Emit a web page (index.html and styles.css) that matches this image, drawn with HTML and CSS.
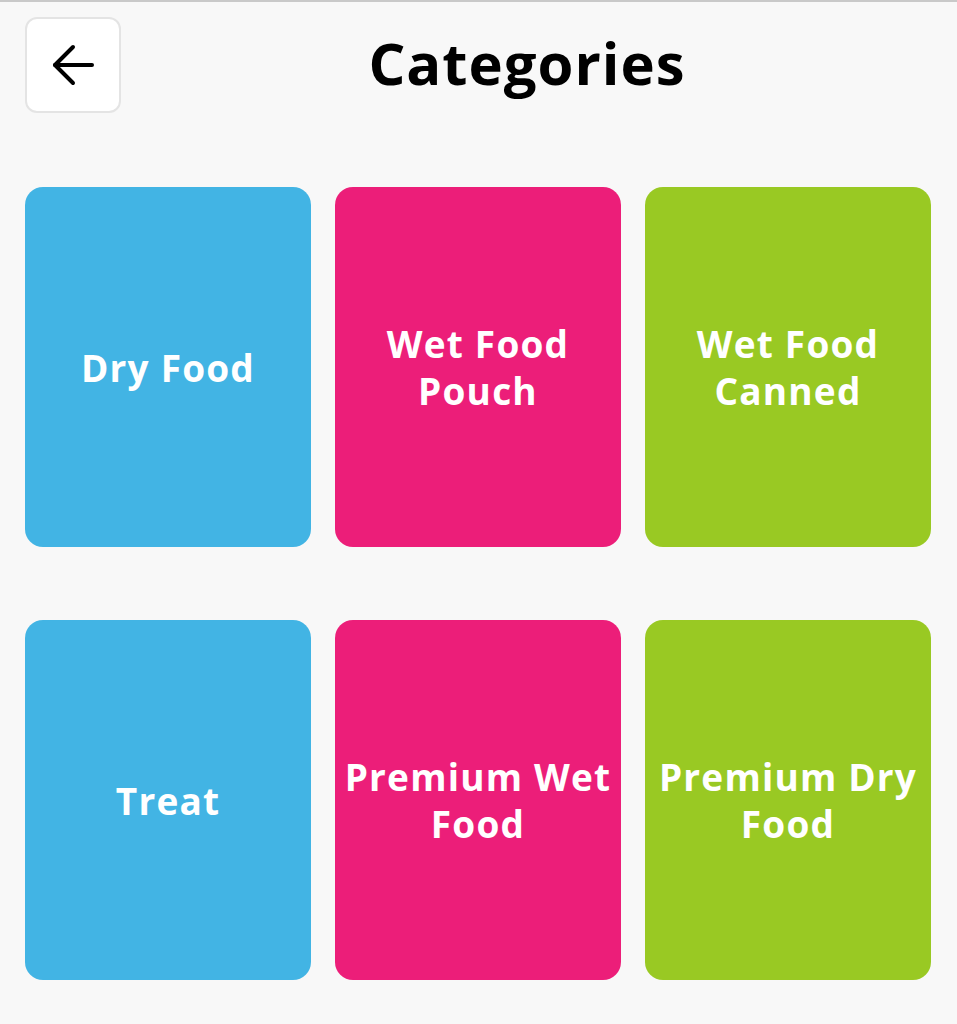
FILE: index.html
```html
<!DOCTYPE html>
<html lang="en">
<head>
    <meta charset="UTF-8">
    <meta name="viewport" content="width=device-width, initial-scale=1.0">
    <title>Categories</title>
    <link rel="stylesheet" href="styles.css">
</head>
<body>

<div class="top-line"></div>

<header class="header">
    <button class="back-btn" type="button" aria-label="Back">
        <svg width="42" height="42" viewBox="0 0 42 42" fill="none" stroke="#000" stroke-width="4" stroke-linecap="round" stroke-linejoin="round">
            <path d="M40 21H3"/>
            <path d="M21 3L3 21L21 39"/>
        </svg>
    </button>
    <h1>Categories</h1>
</header>

<!-- Category cards -->
<div class="category-grid">
    <div class="category blue">Dry Food</div>
    <div class="category pink">Wet Food<br>Pouch</div>
    <div class="category green">Wet Food<br>Canned</div>
    <div class="category blue">Treat</div>
    <div class="category pink">Premium Wet<br>Food</div>
    <div class="category green">Premium Dry<br>Food</div>
</div>

</body>
</html>
```

FILE: styles.css
```css
body {
    font-family: 'Open Sans', 'Liberation Sans', sans-serif;
    margin: 0;
    background-color: #f8f8f8;
}

.top-line {
    height: 2px;
    background-color: #c9c9c9;
}

.header {
    display: flex;
    align-items: center;
    padding: 15px 24px 0 25px;
}

.back-btn {
    width: 96px;
    height: 96px;
    flex-shrink: 0;
    display: flex;
    align-items: center;
    justify-content: center;
    background-color: #fff;
    border: 2px solid #e4e4e4;
    border-radius: 12px;
    padding: 0;
    cursor: pointer;
}

h1 {
    flex: 1;
    margin: 0 0 5px;
    text-align: center;
    font-size: 58px;
    font-weight: 700;
    color: #000;
    letter-spacing: 1px;
}

.category-grid {
    display: grid;
    grid-template-columns: repeat(3, 286px);
    grid-auto-rows: 360px;
    column-gap: 24px;
    row-gap: 73px;
    padding: 74px 0 0 25px;
}

.category {
    display: flex;
    align-items: center;
    justify-content: center;
    text-align: center;
    border-radius: 18px;
    color: #fff;
    font-size: 37px;
    font-weight: 700;
    line-height: 47px;
    letter-spacing: 1.2px;
}

.blue {
    background-color: #42b4e4;
}

.pink {
    background-color: #ec1e79;
}

.green {
    background-color: #99c923;
}
```
